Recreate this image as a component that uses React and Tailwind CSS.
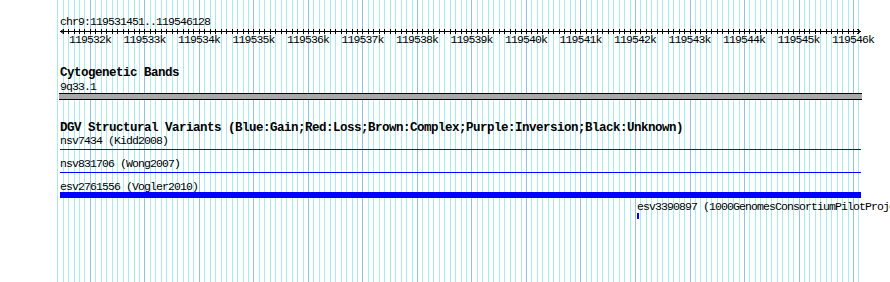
import React from 'react';

const START = 119531451;
const END = 119546128;
const X0 = 60;
const SCALE = 800 / (END - START);

const xOf = (bp) => X0 + (bp - START) * SCALE;

// grid lines every 100bp, darker every 1kb
const gridLines = [];
for (let bp = 119531400; bp <= 119546100; bp += 100) {
  gridLines.push({ bp, x: Math.round(xOf(bp)), major: bp % 1000 === 0 });
}

const rulerLabels = [];
for (let k = 119532; k <= 119546; k++) rulerLabels.push(k);

const features = [
  { name: 'nsv7434 (Kidd2008)', kind: 'line', color: 'bg-[#3a0f6e]' },
  { name: 'nsv831706 (Wong2007)', kind: 'line', color: 'bg-[#0000ff]' },
  { name: 'esv2761556 (Vogler2010)', kind: 'bar', color: 'bg-[#0000ff]' },
];

const mono = "text-[11.5px] leading-[12px] h-[12px] tracking-[-0.9px] whitespace-nowrap";
const bold = "text-[12.5px] leading-[13px] h-[13px] font-bold tracking-[-0.5px] whitespace-nowrap";

const Grid = () => (
  <svg className="absolute inset-0" width="890" height="282">
    {gridLines.map(l => (
      <rect key={l.bp} x={l.x} y="0" width="1" height="282" fill={l.major ? '#8ec2ea' : '#a8ecee'} />
    ))}
  </svg>
);

const Ruler = () => (
  <svg className="block mt-[1px]" width="802" height="5">
    <rect x="0" y="2" width="801" height="1" fill="#000" />
    {gridLines.filter(l => l.bp > START && l.bp < END).map(l => (
      <rect key={l.bp} x={l.x - X0} y="0" width="1" height="5" fill="#000" />
    ))}
    <path d="M4 0 L0.5 2.5 L4 5" stroke="#000" strokeWidth="1" fill="none" />
    <path d="M797 0 L800.5 2.5 L797 5" stroke="#000" strokeWidth="1" fill="none" />
  </svg>
);

export default function App() {
  return (
    <div className="relative w-[890px] h-[282px] overflow-hidden bg-white text-black font-['Liberation_Mono',monospace]">
      <Grid />
      <div className="relative pl-[60px]">
        {/* ruler */}
        <div className={`${mono} mt-[16px]`}>chr9:119531451..119546128</div>
        <Ruler />
        <div className="flex ml-[2.7px]">
          {rulerLabels.map(k => (
            <div key={k} className={`${mono} w-[54.5px] shrink-0 flex justify-center`}>
              {k}k
            </div>
          ))}
        </div>

        {/* cytogenetic bands */}
        <div className={`${bold} mt-[21px]`}>Cytogenetic Bands</div>
        <div className={`${mono} mt-[1px]`}>9q33.1</div>
        <div className="-ml-[1px] w-[803px] h-[7px] bg-[#a9a9a9] border-y border-black" />

        {/* DGV */}
        <div className={`${bold} mt-[22px]`}>
          DGV Structural Variants (Blue:Gain;Red:Loss;Brown:Complex;Purple:Inversion;Black:Unknown)
        </div>
        {features.map(f => (
          <div key={f.name}>
            <div className={mono}>{f.name}</div>
            <div className="h-[9px]">
              {f.kind === 'line' ? (
                <div className={`mt-[2px] h-[1px] w-[801px] ${f.color}`} />
              ) : (
                <div className={`-mt-[1px] h-[6px] w-[801px] ${f.color}`} />
              )}
            </div>
          </div>
        ))}
        <div className="ml-[577px]">
          <div className={mono}>esv3390897 (1000GenomesConsortiumPilotProject)</div>
          <div className="w-[2px] h-[6px] bg-[#0000ff]" />
        </div>
      </div>
    </div>
  );
}
